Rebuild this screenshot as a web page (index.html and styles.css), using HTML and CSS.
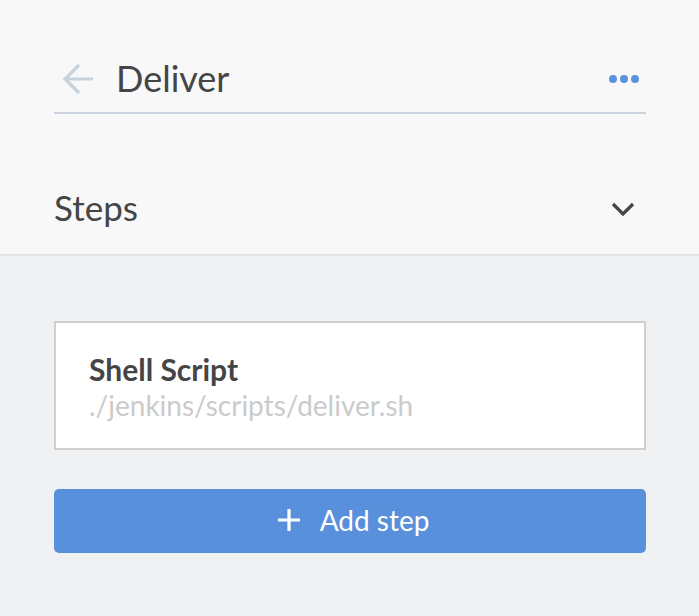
FILE: index.html
```html
<!DOCTYPE html>
<html>
<head>
<meta charset="utf-8">
<link rel="stylesheet" href="styles.css">
</head>
<body>
<div class="top">
  <div class="header">
    <svg class="back" width="34" height="34" viewBox="0 0 34 34"><path d="M31 17H4M17 3L3 17l14 14" fill="none" stroke="#c8d2db" stroke-width="3.2"/></svg>
    <div class="title">Deliver</div>
    <div class="dots"><span></span><span></span><span></span></div>
  </div>
  <div class="steps-row">
    <div class="steps">Steps</div>
    <svg class="chev" width="24" height="16" viewBox="0 0 24 16"><path d="M2 3l10 10L22 3" fill="none" stroke="#454545" stroke-width="3.2"/></svg>
  </div>
</div>
<div class="bottom">
  <div class="card">
    <div class="card-title">Shell Script</div>
    <div class="card-sub">./jenkins/scripts/deliver.sh</div>
  </div>
  <button class="add"><svg width="24" height="24" viewBox="0 0 24 24"><path d="M12 1v22M1 12h22" stroke="#fff" stroke-width="3.2"/></svg><span>Add step</span></button>
</div>
</body>
</html>
```
FILE: styles.css
```css
html, body { margin: 0; padding: 0; }
body {
  font-family: Lato, "Liberation Sans", sans-serif;
  background: #f0f1f3;
  color: #454545;
  width: 699px;
  height: 616px;
  overflow: hidden;
}
.top {
  background: #f8f8f8;
  border-bottom: 2px solid #e2e3e5;
  padding: 50px 53px 0 54px;
  height: 204px;
}
.header {
  display: flex;
  align-items: center;
  height: 62px;
  border-bottom: 2px solid #ccd5df;
}
.back { margin-left: 8px; margin-right: 20px; margin-bottom: 4px; }
.title { font-size: 36px; flex: 1; margin-bottom: 6px; }
.dots { display: flex; gap: 3px; margin-right: 7px; margin-bottom: 4px; }
.dots span { width: 8px; height: 8px; border-radius: 50%; background: #5b92dc; }
.steps-row {
  display: flex;
  align-items: flex-start;
  justify-content: space-between;
  height: 190px;
  padding-top: 71px;
  box-sizing: border-box;
}
.steps { font-size: 35px; line-height: 44px; }
.chev { margin-right: 11px; margin-top: 16px; }
.bottom { padding: 65px 53px 0 54px; }
.card {
  background: #fff;
  border: 2px solid #cfcfcf;
  box-sizing: border-box;
  height: 129px;
  padding: 29px 33px 0;
}
.card-title { font-weight: bold; font-size: 30px; line-height: 34px; color: #454545; }
.card-sub { font-size: 28px; line-height: 30px; margin-top: 4px; color: #cbcbcb; }
.add {
  margin-top: 39px;
  width: 100%;
  height: 64px;
  background: #5890db;
  border: none;
  border-radius: 5px;
  color: #fff;
  font-family: Lato, "Liberation Sans", sans-serif;
  font-size: 28px;
  display: flex;
  align-items: center;
  justify-content: center;
  gap: 19px;
  padding: 0 0 3px;
}
.add svg { margin-left: 6px; }
```
